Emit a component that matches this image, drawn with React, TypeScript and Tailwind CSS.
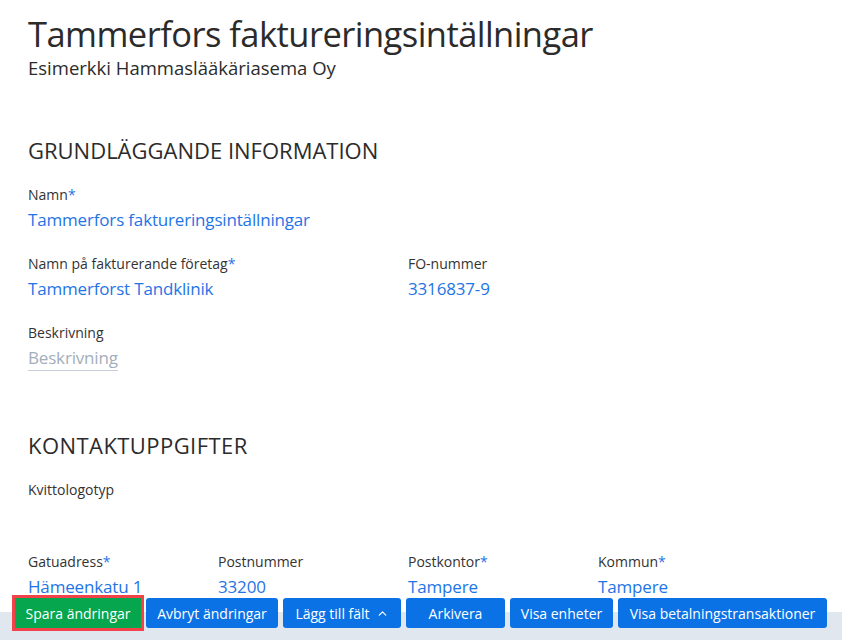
import React from 'react';
import { ChevronUp } from 'lucide-react';

type FieldProps = {
  label: string;
  value?: string;
  required?: boolean;
  placeholder?: boolean;
  className?: string;
};

const Field: React.FC<FieldProps> = ({ label, value, required, placeholder, className }) => (
  <div className={`flex flex-col ${className ?? ''}`}>
    <div className="h-[20px] text-[14px] leading-[20px] text-[#333]">
      {label}
      {required && <span className="text-[#1f74e6]">*</span>}
    </div>
    <div className="h-[26px] text-[17px] leading-[30px] tracking-[-0.01em]">
      {placeholder ? (
        <span className="border-b border-[#c6d0dc] pb-[1px] text-[#a3aebb]">{value}</span>
      ) : (
        <span className="text-[#1f74e6]">{value}</span>
      )}
    </div>
  </div>
);

const FooterButton: React.FC<{ width: string; children: React.ReactNode }> = ({ width, children }) => (
  <button
    className={`${width} flex h-[30px] items-center justify-center gap-[6px] rounded-[3px] bg-[#0b72e6] text-[14px] text-white`}
  >
    {children}
  </button>
);

const App: React.FC = () => {
  return (
    <div
      className="relative h-[640px] overflow-hidden bg-white text-[#2b2b2b]"
      style={{ fontFamily: '"Open Sans", "Noto Sans", sans-serif' }}
    >
      <div className="px-[28px] pt-[12px]">
        <h1 className="text-[34.5px] leading-[44px] tracking-[-0.016em]">Tammerfors faktureringsintällningar</h1>
        <p className="text-[18.5px] leading-[24px]">Esimerkki Hammaslääkäriasema Oy</p>

        <section className="mt-[54px]">
          <h2 className="text-[22px] leading-[32px] uppercase">Grundläggande information</h2>
          <div className="mt-[19px] grid grid-cols-[190px_190px_190px_190px] gap-y-[23px]">
            <Field className="col-span-4" label="Namn" required value="Tammerfors faktureringsintällningar" />
            <Field className="col-span-2" label="Namn på fakturerande företag" required value="Tammerforst Tandklinik" />
            <Field className="col-span-2" label="FO-nummer" value="3316837-9" />
            <Field className="col-span-4" label="Beskrivning" placeholder value="Beskrivning" />
          </div>
        </section>

        <section className="mt-[60px]">
          <h2 className="text-[22px] leading-[32px] tracking-[0.02em] uppercase">Kontaktuppgifter</h2>
          <div className="mt-[19px] grid grid-cols-[190px_190px_190px_190px] gap-y-[26px]">
            <Field className="col-span-4" label="Kvittologotyp" />
            <Field label="Gatuadress" required value="Hämeenkatu 1" />
            <Field label="Postnummer" value="33200" />
            <Field label="Postkontor" required value="Tampere" />
            <Field label="Kommun" required value="Tampere" />
          </div>
        </section>
      </div>

      <footer className="absolute bottom-0 left-0 right-0 h-[45px]">
        <div className="absolute bottom-0 left-0 right-0 h-[28px] bg-[#e1e7ee]" />
        <div className="relative flex items-center gap-[5px] pl-[15px] pt-[3px]">
          <button className="flex h-[30px] w-[126px] items-center justify-center bg-[#05a64d] text-[14px] text-white outline outline-[3px] outline-[#f2434a]">
            Spara ändringar
          </button>
          <FooterButton width="w-[132px]">Avbryt ändringar</FooterButton>
          <FooterButton width="w-[118px]">
            Lägg till fält
            <ChevronUp size={13} strokeWidth={2.25} />
          </FooterButton>
          <FooterButton width="w-[99px]">Arkivera</FooterButton>
          <FooterButton width="w-[103px]">Visa enheter</FooterButton>
          <FooterButton width="w-[209px]">Visa betalningstransaktioner</FooterButton>
        </div>
      </footer>
    </div>
  );
};

export default App;
